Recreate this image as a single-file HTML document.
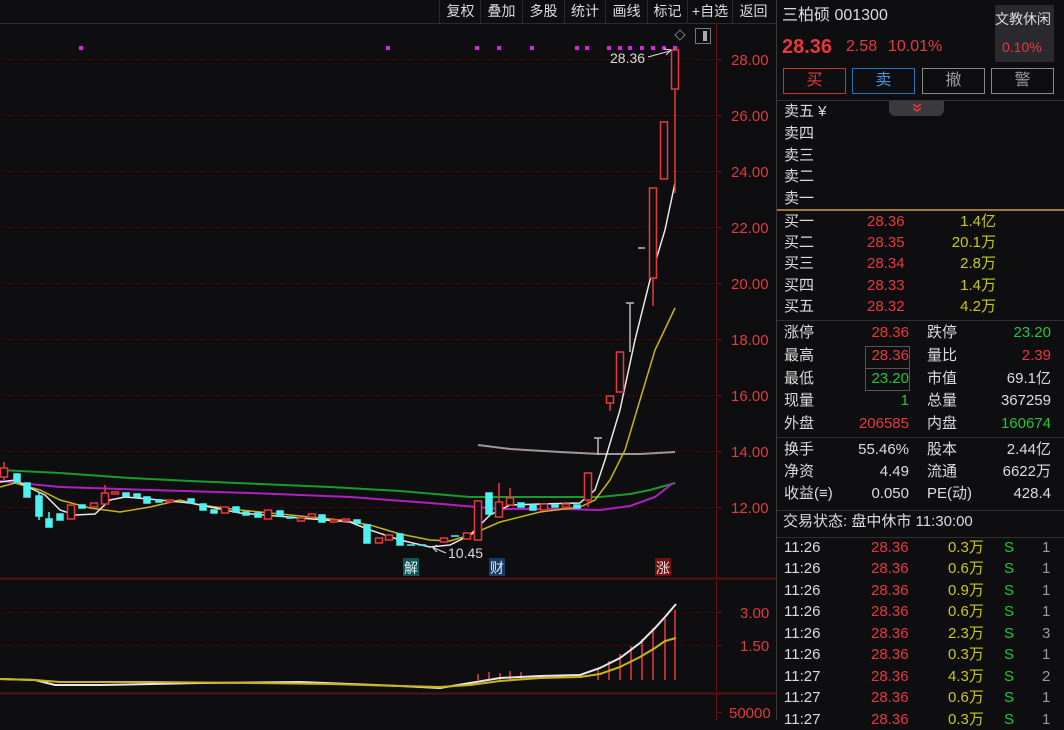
<!DOCTYPE html>
<html><head><meta charset="utf-8"><style>
*{margin:0;padding:0;box-sizing:border-box}
body{width:1064px;height:720px;background:#0e0e11;overflow:hidden;position:relative;font-family:"Liberation Sans","Noto Sans CJK SC",sans-serif;font-size:15px;color:#dcdcdc}
.a{position:absolute;white-space:nowrap;line-height:20px}
.r{color:#e8383d}.g{color:#1fc73a}.y{color:#c8c814}.w{color:#dcdcdc}.gr{color:#9a9a9a}
.tb{position:absolute;top:0;height:23px;line-height:23px;font-size:14px;color:#dcdcdc;text-align:center;border-right:1px solid #2a2a2e}
.btn{position:absolute;top:68px;height:26px;width:63px;border:1.5px solid #888;text-align:center;line-height:23px;font-size:16px}
.hl{position:absolute;height:1px;background:#303034}
.rt{text-align:right}
</style></head><body>

<div class="hl" style="left:0;top:23px;width:776px;background:#2c2c30"></div>
<div class="tb" style="left:438px;width:2px;border-right:1px solid #2a2a2e"></div>
<div class="tb" style="left:441px;width:40px">复权</div>
<div class="tb" style="left:481px;width:42px">叠加</div>
<div class="tb" style="left:523px;width:42px">多股</div>
<div class="tb" style="left:565px;width:41px">统计</div>
<div class="tb" style="left:606px;width:42px">画线</div>
<div class="tb" style="left:648px;width:40px">标记</div>
<div class="tb" style="left:688px;width:45px">+自选</div>
<div class="tb" style="left:733px;width:41px;border-right:none">返回</div>

<svg width="776" height="720" style="position:absolute;left:0;top:0">
<g stroke="#5a1414" stroke-dasharray="1,3" stroke-width="1">
<line x1="0" x2="716" y1="59.5" y2="59.5"/><line x1="0" x2="716" y1="115.5" y2="115.5"/><line x1="0" x2="716" y1="171.5" y2="171.5"/><line x1="0" x2="716" y1="227.5" y2="227.5"/><line x1="0" x2="716" y1="283.5" y2="283.5"/><line x1="0" x2="716" y1="339.5" y2="339.5"/><line x1="0" x2="716" y1="395.5" y2="395.5"/><line x1="0" x2="716" y1="451.5" y2="451.5"/><line x1="0" x2="716" y1="507.5" y2="507.5"/>
<line x1="0" x2="716" y1="612.5" y2="612.5"/><line x1="0" x2="716" y1="645.5" y2="645.5"/>
</g>
<line x1="716.5" y1="24" x2="716.5" y2="720" stroke="#6a1212"/>
<line x1="0" y1="578.5" x2="776" y2="578.5" stroke="#5a1010" stroke-width="2"/>
<line x1="0" y1="693.5" x2="776" y2="693.5" stroke="#5a1010" stroke-width="2"/>
<g stroke="#6a1212"><line x1="716" x2="722" y1="59.5" y2="59.5"/><line x1="716" x2="722" y1="115.5" y2="115.5"/><line x1="716" x2="722" y1="171.5" y2="171.5"/><line x1="716" x2="722" y1="227.5" y2="227.5"/><line x1="716" x2="722" y1="283.5" y2="283.5"/><line x1="716" x2="722" y1="339.5" y2="339.5"/><line x1="716" x2="722" y1="395.5" y2="395.5"/><line x1="716" x2="722" y1="451.5" y2="451.5"/><line x1="716" x2="722" y1="507.5" y2="507.5"/><line x1="716" x2="722" y1="612.5" y2="612.5"/><line x1="716" x2="722" y1="645.5" y2="645.5"/><line x1="716" x2="722" y1="712.5" y2="712.5"/></g>
<g fill="#e03a3a" font-size="15" font-family="Liberation Sans">
<text x="731" y="65">28.00</text><text x="731" y="121">26.00</text><text x="731" y="177">24.00</text><text x="731" y="233">22.00</text><text x="731" y="289">20.00</text><text x="731" y="345">18.00</text><text x="731" y="401">16.00</text><text x="731" y="457">14.00</text><text x="731" y="513">12.00</text>
<text x="740" y="618">3.00</text><text x="740" y="651">1.50</text><text x="729" y="718">50000</text>
</g>
<g fill="#e020e0">
<rect x="79" y="46" width="4" height="4"/><rect x="386" y="46" width="4" height="4"/><rect x="475" y="46" width="4" height="4"/><rect x="497" y="46" width="4" height="4"/><rect x="530" y="46" width="4" height="4"/><rect x="575" y="46" width="4" height="4"/><rect x="585" y="46" width="4" height="4"/><rect x="607" y="46" width="4" height="4"/><rect x="618" y="46" width="4" height="4"/><rect x="628" y="46" width="4" height="4"/><rect x="640" y="46" width="4" height="4"/><rect x="651" y="46" width="4" height="4"/><rect x="662" y="46" width="4" height="4"/><rect x="673" y="46" width="4" height="4"/>
</g>
<path d="M680 30 l5 5 -5 5 -5 -5z" fill="none" stroke="#777"/>
<rect x="695.5" y="28.5" width="15" height="15" fill="none" stroke="#777"/><rect x="703" y="31" width="4" height="10" fill="#aaa"/>
<polyline fill="none" stroke="#1a9a2a" stroke-width="2" points="0,470 60,473 130,478 190,481 260,484 330,487 400,491 470,497 560,497 600,497 630,494 650,490 675,483"/>
<polyline fill="none" stroke="#b020c0" stroke-width="2" points="0,481 60,487 150,490 250,493 350,497 430,503 500,509 560,509 600,510 630,506 655,497 673,483"/>
<polyline fill="none" stroke="#9a9a9a" stroke-width="2" points="478,445 510,449 560,452 600,454 640,454 675,452"/>
<polyline fill="none" stroke="#c8b414" stroke-width="1.5" points="0,487 15,483 40,490 60,500 90,508 120,512 150,507 180,500 200,505 240,510 290,515 340,520 370,525 400,534 430,540 450,541 470,535 500,522 540,512 580,507 595,500 610,480 625,450 640,400 655,350 675,308"/>
<polyline fill="none" stroke="#e8e8e8" stroke-width="1.5" points="0,482 15,480 30,488 45,495 60,510 75,515 95,514 110,500 125,497 160,500 190,503 240,513 300,518 350,522 370,530 400,540 430,547 450,545 470,535 490,515 510,505 540,504 580,503 595,490 605,460 620,410 635,340 650,280 665,230 675,183"/>
<g stroke-width="1.5">
<g stroke="#e8383d" fill="#0e0e11">
<line x1="4" y1="462" x2="4" y2="480"/><rect x="0.5" y="468" width="7" height="9"/>
<rect x="67.5" y="505" width="7" height="14"/><rect x="90.5" y="503" width="7" height="4"/>
<line x1="105" y1="485" x2="105" y2="504"/><rect x="101.5" y="493" width="7" height="11"/>
<rect x="111.5" y="492" width="7" height="2"/><rect x="166.5" y="500" width="7" height="2"/>
<rect x="221.5" y="507" width="7" height="6"/><rect x="264.5" y="510" width="7" height="9"/>
<rect x="297.5" y="518" width="7" height="3"/><rect x="308.5" y="514" width="7" height="3"/>
<rect x="330.5" y="520" width="7" height="2"/><rect x="342.5" y="519" width="7" height="2"/>
<rect x="375.5" y="538" width="7" height="5"/><rect x="385.5" y="535" width="7" height="5"/>
<rect x="440.5" y="538" width="7" height="4"/><rect x="463.5" y="533" width="7" height="6"/>
<rect x="474.5" y="501" width="7" height="39"/>
<line x1="499" y1="483" x2="499" y2="517"/><rect x="495.5" y="502" width="7" height="15"/>
<line x1="510" y1="488" x2="510" y2="505"/><rect x="506.5" y="498" width="7" height="7"/>
<rect x="540.5" y="504" width="7" height="6"/><rect x="562.5" y="504" width="7" height="3"/>
<line x1="588" y1="500" x2="588" y2="507"/><rect x="584.5" y="473" width="7" height="27"/>
<line x1="610" y1="403" x2="610" y2="411"/><rect x="606.5" y="396" width="7" height="7"/>
<rect x="616.5" y="352" width="7" height="40"/>
<line x1="653" y1="278" x2="653" y2="306"/><rect x="649.5" y="188" width="7" height="90"/>
<rect x="660.5" y="122" width="7" height="57"/>
<line x1="675" y1="89" x2="675" y2="193"/><rect x="671.5" y="50" width="7" height="39"/>
</g>
<g fill="#4ef0f0" stroke="#4ef0f0">
<rect x="14" y="474" width="6" height="8"/><rect x="24" y="483" width="6" height="14"/><line x1="39" y1="492" x2="39" y2="520"/><rect x="36" y="496" width="6" height="20"/><rect x="46" y="519" width="6" height="8"/><line x1="49" y1="512" x2="49" y2="519"/><rect x="57" y="514" width="6" height="6"/><rect x="79" y="505" width="6" height="3"/><rect x="123" y="493" width="6" height="3"/><rect x="134" y="494" width="6" height="3"/><rect x="144" y="497" width="6" height="6"/><rect x="156" y="500" width="6" height="2"/><rect x="188" y="499" width="6" height="4"/><rect x="200" y="504" width="6" height="6"/><rect x="211" y="510" width="6" height="3"/><rect x="233" y="507" width="6" height="5"/><rect x="243" y="512" width="6" height="3"/><rect x="255" y="513" width="6" height="4"/><rect x="277" y="511" width="6" height="5"/><rect x="287" y="517" width="6" height="1"/><rect x="319" y="515" width="6" height="7"/><rect x="354" y="520" width="6" height="3"/><rect x="364" y="525" width="6" height="18"/><rect x="397" y="534" width="6" height="11"/><line x1="407" y1="545" x2="415" y2="545"/><line x1="418" y1="545" x2="426" y2="545"/><line x1="451" y1="536" x2="459" y2="536"/><rect x="486" y="493" width="6" height="21"/><rect x="518" y="503" width="6" height="4"/><rect x="530" y="505" width="6" height="5"/><rect x="552" y="505" width="6" height="2"/><rect x="574" y="505" width="6" height="3"/>
</g>
<g stroke="#bbb"><line x1="598" y1="438" x2="598" y2="455"/><line x1="594" y1="438" x2="602" y2="438"/><line x1="630" y1="303" x2="630" y2="352"/><line x1="626" y1="303" x2="634" y2="303"/><line x1="638" y1="248" x2="645" y2="248"/></g>
</g>
<text x="610" y="63" fill="#dcdcdc" font-size="14" font-family="Liberation Sans">28.36</text>
<path d="M648 57 L670 51" stroke="#ddd" fill="none"/><path d="M664 49 L671 50 L666 55" stroke="#ddd" fill="none"/>
<text x="448" y="558" fill="#dcdcdc" font-size="14" font-family="Liberation Sans">10.45</text>
<path d="M446 553 L434 548" stroke="#ddd"/><path d="M437 545 L433 548 L437 552" stroke="#ddd" fill="none"/>
<rect x="403" y="558" width="16" height="18" fill="#0d5656"/><text x="404" y="573" fill="#e0f0f0" font-size="14" font-family="Noto Sans CJK SC">解</text>
<rect x="489" y="558" width="16" height="18" fill="#173a66"/><text x="490" y="573" fill="#e0e8f0" font-size="14" font-family="Noto Sans CJK SC">财</text>
<rect x="655" y="558" width="16" height="18" fill="#701010"/><text x="656" y="573" fill="#f0e0e0" font-size="14" font-family="Noto Sans CJK SC">涨</text>
<g stroke="#e8383d" stroke-width="1.5"><line x1="598" y1="668" x2="598" y2="680"/><line x1="609" y1="661" x2="609" y2="680"/><line x1="620" y1="654" x2="620" y2="680"/><line x1="631" y1="646" x2="631" y2="680"/><line x1="642" y1="639" x2="642" y2="680"/><line x1="653" y1="628" x2="653" y2="680"/><line x1="665" y1="619" x2="665" y2="680"/><line x1="675" y1="610" x2="675" y2="680"/>
<line x1="478" y1="674" x2="478" y2="680"/><line x1="489" y1="672" x2="489" y2="680"/><line x1="500" y1="673" x2="500" y2="680"/><line x1="510" y1="671" x2="510" y2="680"/><line x1="521" y1="672" x2="521" y2="680"/></g>
<polyline fill="none" stroke="#e8e8e8" stroke-width="2" points="0,679 35,680 55,685 100,685 200,683 300,682 400,686 440,688 470,683 500,678 540,676 580,675 600,668 620,658 640,643 655,628 665,617 676,604"/>
<polyline fill="none" stroke="#c8b414" stroke-width="2" points="0,679 35,680 60,682 150,682 250,683 330,684 400,686 440,687 470,685 500,681 540,678 580,677 600,674 620,667 640,657 655,648 665,641 676,638"/>
</svg>

<div style="position:absolute;left:776px;top:0;width:1px;height:720px;background:#3a3a3e"></div>
<div class="a w" style="left:782px;top:6px;font-size:16px">三柏硕 001300</div>
<div style="position:absolute;left:995px;top:5px;width:59px;height:57px;background:#2a2a2e"></div>
<div class="a w" style="left:995px;top:9px;font-size:14px">文教休闲</div>
<div class="a r" style="left:1002px;top:37px;font-size:14px">0.10%</div>
<div class="a r" style="left:782px;top:35px;font-size:20px;font-weight:bold;line-height:24px">28.36</div>
<div class="a r" style="left:846px;top:37px;font-size:16px">2.58</div>
<div class="a r" style="left:888px;top:37px;font-size:16px">10.01%</div>
<div class="btn r" style="left:783px;border-color:#d03030">买</div>
<div class="btn" style="left:852px;border-color:#2a72b8;color:#4a92d8">卖</div>
<div class="btn gr" style="left:922px">撤</div>
<div class="btn gr" style="left:991px">警</div>
<div class="hl" style="left:777px;top:100px;width:287px;background:#333"></div>
<div style="position:absolute;left:889px;top:101px;width:55px;height:15px;background:#3a3a3e;border-radius:0 0 6px 6px"></div>
<svg style="position:absolute;left:910px;top:103px" width="14" height="10"><path d="M3 1 L7 4 L11 1 M3 5 L7 8 L11 5" stroke="#e8383d" stroke-width="1.5" fill="none"/></svg>
<div class="a w" style="left:784px;top:102px">卖五 ¥</div>
<div class="a w" style="left:784px;top:124px">卖四</div>
<div class="a w" style="left:784px;top:146px">卖三</div>
<div class="a w" style="left:784px;top:167px">卖二</div>
<div class="a w" style="left:784px;top:189px">卖一</div>
<div class="hl" style="left:777px;top:209px;width:287px;height:2px;background:#a07830"></div>
<div class="a w" style="left:784px;top:212px">买一</div><div class="a r" style="left:867px;top:212px">28.36</div><div class="a y rt" style="left:930px;top:212px;width:66px">1.4亿</div>
<div class="a w" style="left:784px;top:233px">买二</div><div class="a r" style="left:867px;top:233px">28.35</div><div class="a y rt" style="left:930px;top:233px;width:66px">20.1万</div>
<div class="a w" style="left:784px;top:254px">买三</div><div class="a r" style="left:867px;top:254px">28.34</div><div class="a y rt" style="left:930px;top:254px;width:66px">2.8万</div>
<div class="a w" style="left:784px;top:276px">买四</div><div class="a r" style="left:867px;top:276px">28.33</div><div class="a y rt" style="left:930px;top:276px;width:66px">1.4万</div>
<div class="a w" style="left:784px;top:297px">买五</div><div class="a r" style="left:867px;top:297px">28.32</div><div class="a y rt" style="left:930px;top:297px;width:66px">4.2万</div>
<div class="hl" style="left:777px;top:320px;width:287px"></div>
<div style="position:absolute;left:865px;top:346px;width:45px;height:45px;border:1px solid #555"></div>
<div class="hl" style="left:866px;top:368px;width:43px;background:#555"></div>
<div class="a w" style="left:784px;top:323px">涨停</div><div class="a r rt" style="left:840px;top:323px;width:69px">28.36</div><div class="a w" style="left:927px;top:323px">跌停</div><div class="a g rt" style="left:990px;top:323px;width:61px">23.20</div>
<div class="a w" style="left:784px;top:346px">最高</div><div class="a r rt" style="left:840px;top:346px;width:69px">28.36</div><div class="a w" style="left:927px;top:346px">量比</div><div class="a r rt" style="left:990px;top:346px;width:61px">2.39</div>
<div class="a w" style="left:784px;top:369px">最低</div><div class="a g rt" style="left:840px;top:369px;width:69px">23.20</div><div class="a w" style="left:927px;top:369px">市值</div><div class="a w rt" style="left:990px;top:369px;width:61px">69.1亿</div>
<div class="a w" style="left:784px;top:391px">现量</div><div class="a g rt" style="left:840px;top:391px;width:69px">1</div><div class="a w" style="left:927px;top:391px">总量</div><div class="a w rt" style="left:990px;top:391px;width:61px">367259</div>
<div class="a w" style="left:784px;top:414px">外盘</div><div class="a r rt" style="left:840px;top:414px;width:69px">206585</div><div class="a w" style="left:927px;top:414px">内盘</div><div class="a g rt" style="left:990px;top:414px;width:61px">160674</div>
<div class="hl" style="left:777px;top:437px;width:287px"></div>
<div class="a w" style="left:784px;top:440px">换手</div><div class="a w rt" style="left:840px;top:440px;width:69px">55.46%</div><div class="a w" style="left:927px;top:440px">股本</div><div class="a w rt" style="left:990px;top:440px;width:61px">2.44亿</div>
<div class="a w" style="left:784px;top:462px">净资</div><div class="a w rt" style="left:840px;top:462px;width:69px">4.49</div><div class="a w" style="left:927px;top:462px">流通</div><div class="a w rt" style="left:990px;top:462px;width:61px">6622万</div>
<div class="a w" style="left:784px;top:484px">收益(≡)</div><div class="a w rt" style="left:840px;top:484px;width:69px">0.050</div><div class="a w" style="left:927px;top:484px">PE(动)</div><div class="a w rt" style="left:990px;top:484px;width:61px">428.4</div>
<div class="hl" style="left:777px;top:510px;width:287px"></div>
<div class="a w" style="left:783px;top:512px">交易状态: 盘中休市 11:30:00</div>
<div class="hl" style="left:777px;top:537px;width:287px"></div>
<div style="position:absolute;left:777px;top:538px;width:287px">
<div style="position:relative;height:182px">
<div class="a w" style="left:7px;top:0">11:26</div><div class="a r" style="left:94px;top:0">28.36</div><div class="a y" style="left:171px;top:0">0.3万</div><div class="a g" style="left:227px;top:0">S</div><div class="a gr" style="left:265px;top:0">1</div>
<div class="a w" style="left:7px;top:21px">11:26</div><div class="a r" style="left:94px;top:21px">28.36</div><div class="a y" style="left:171px;top:21px">0.6万</div><div class="a g" style="left:227px;top:21px">S</div><div class="a gr" style="left:265px;top:21px">1</div>
<div class="a w" style="left:7px;top:43px">11:26</div><div class="a r" style="left:94px;top:43px">28.36</div><div class="a y" style="left:171px;top:43px">0.9万</div><div class="a g" style="left:227px;top:43px">S</div><div class="a gr" style="left:265px;top:43px">1</div>
<div class="a w" style="left:7px;top:64px">11:26</div><div class="a r" style="left:94px;top:64px">28.36</div><div class="a y" style="left:171px;top:64px">0.6万</div><div class="a g" style="left:227px;top:64px">S</div><div class="a gr" style="left:265px;top:64px">1</div>
<div class="a w" style="left:7px;top:86px">11:26</div><div class="a r" style="left:94px;top:86px">28.36</div><div class="a y" style="left:171px;top:86px">2.3万</div><div class="a g" style="left:227px;top:86px">S</div><div class="a gr" style="left:265px;top:86px">3</div>
<div class="a w" style="left:7px;top:107px">11:26</div><div class="a r" style="left:94px;top:107px">28.36</div><div class="a y" style="left:171px;top:107px">0.3万</div><div class="a g" style="left:227px;top:107px">S</div><div class="a gr" style="left:265px;top:107px">1</div>
<div class="a w" style="left:7px;top:129px">11:27</div><div class="a r" style="left:94px;top:129px">28.36</div><div class="a y" style="left:171px;top:129px">4.3万</div><div class="a g" style="left:227px;top:129px">S</div><div class="a gr" style="left:265px;top:129px">2</div>
<div class="a w" style="left:7px;top:150px">11:27</div><div class="a r" style="left:94px;top:150px">28.36</div><div class="a y" style="left:171px;top:150px">0.6万</div><div class="a g" style="left:227px;top:150px">S</div><div class="a gr" style="left:265px;top:150px">1</div>
<div class="a w" style="left:7px;top:172px">11:27</div><div class="a r" style="left:94px;top:172px">28.36</div><div class="a y" style="left:171px;top:172px">0.3万</div><div class="a g" style="left:227px;top:172px">S</div><div class="a gr" style="left:265px;top:172px">1</div>
</div></div>
</body></html>
